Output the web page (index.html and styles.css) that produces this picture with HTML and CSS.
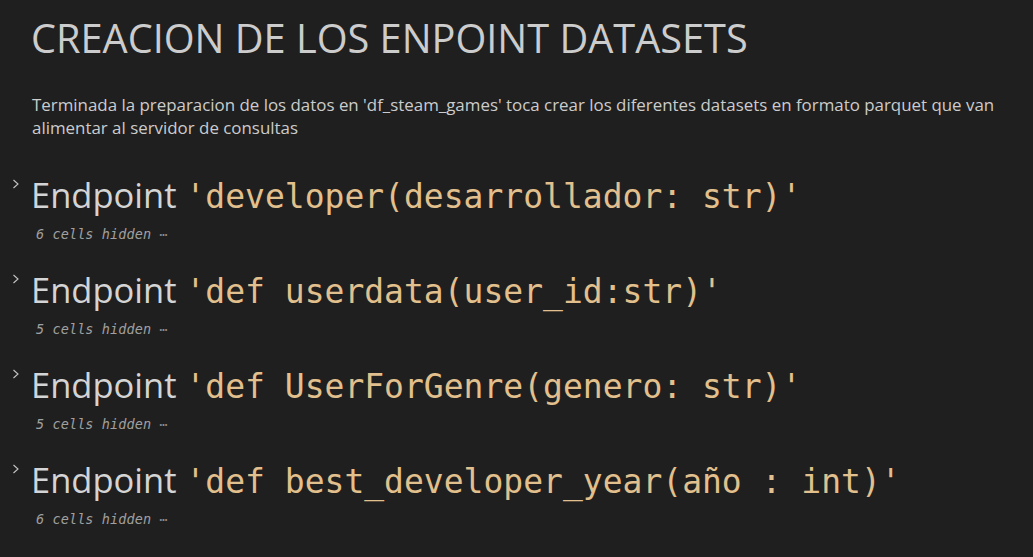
FILE: index.html
```html
<!DOCTYPE html>
<html>
<head>
<meta charset="utf-8">
<link rel="stylesheet" href="styles.css">
</head>
<body>
<div class="nb">
  <div class="md">
    <h1 class="title">CREACION DE LOS ENPOINT DATASETS</h1>
    <p class="para">Terminada la preparacion de los datos en 'df_steam_games' toca crear los diferentes datasets en formato parquet que van alimentar al servidor de consultas</p>
  </div>

  <div class="section">
    <div class="head">
      <span class="chev"><svg width="8" height="10" viewBox="0 0 8 10"><path d="M1.5 1 L6 5 L1.5 9" fill="none" stroke="#c5c5c5" stroke-width="1.1"/></svg></span>
      <h2 class="ep">Endpoint <code class="sig">'developer(desarrollador: str)'</code></h2>
    </div>
    <div class="hidden">6 cells hidden <span class="dots">⋯</span></div>
  </div>

  <div class="section">
    <div class="head">
      <span class="chev"><svg width="8" height="10" viewBox="0 0 8 10"><path d="M1.5 1 L6 5 L1.5 9" fill="none" stroke="#c5c5c5" stroke-width="1.1"/></svg></span>
      <h2 class="ep">Endpoint <code class="sig">'def userdata(user_id:str)'</code></h2>
    </div>
    <div class="hidden">5 cells hidden <span class="dots">⋯</span></div>
  </div>

  <div class="section">
    <div class="head">
      <span class="chev"><svg width="8" height="10" viewBox="0 0 8 10"><path d="M1.5 1 L6 5 L1.5 9" fill="none" stroke="#c5c5c5" stroke-width="1.1"/></svg></span>
      <h2 class="ep">Endpoint <code class="sig">'def UserForGenre(genero: str)'</code></h2>
    </div>
    <div class="hidden">5 cells hidden <span class="dots">⋯</span></div>
  </div>

  <div class="section">
    <div class="head">
      <span class="chev"><svg width="8" height="10" viewBox="0 0 8 10"><path d="M1.5 1 L6 5 L1.5 9" fill="none" stroke="#c5c5c5" stroke-width="1.1"/></svg></span>
      <h2 class="ep">Endpoint <code class="sig">'def best_developer_year(año : int)'</code></h2>
    </div>
    <div class="hidden">6 cells hidden <span class="dots">⋯</span></div>
  </div>
</div>
</body>
</html>
```

FILE: styles.css
```css
html, body {
  margin: 0;
  padding: 0;
  background: #1f1f1f;
  width: 1033px;
  height: 557px;
  overflow: hidden;
}
.nb {
  padding: 0 0 0 12px;
  font-family: "Open Sans", "Noto Sans", sans-serif;
  color: #cccccc;
}
.md {
  padding: 0 8px 0 19px;
}
.title {
  margin: 0;
  padding-top: 11px;
  font-weight: 400;
  font-size: 39.7px;
  line-height: 54px;
  color: #cccccc;
}
.para {
  margin: 28px 0 0 1px;
  font-size: 16.9px;
  line-height: 23px;
  color: #cccccc;
}
.section {
  margin-top: 23px;
}
.md + .section {
  margin-top: 33px;
}
.head {
  display: flex;
  align-items: flex-start;
  height: 46px;
}
.chev {
  width: 19px;
  display: flex;
  padding-top: 7px;
}
.ep {
  margin: 0;
  font-weight: 400;
  font-size: 34.5px;
  line-height: 46px;
  height: 46px;
  color: #d4d4d4;
  white-space: nowrap;
}
.sig {
  font-family: "DejaVu Sans Mono", monospace;
  font-size: 33px;
  color: #e2c08d;
}
.hidden {
  margin: 6px 0 0 24px;
  height: 20px;
  font-family: "DejaVu Sans Mono", monospace;
  font-style: italic;
  font-size: 13.5px;
  letter-spacing: 0.1px;
  line-height: 20px;
  color: #a0a0a0;
}
.dots {
  font-style: normal;
  letter-spacing: 0;
  color: #8a8a8a;
}
```
